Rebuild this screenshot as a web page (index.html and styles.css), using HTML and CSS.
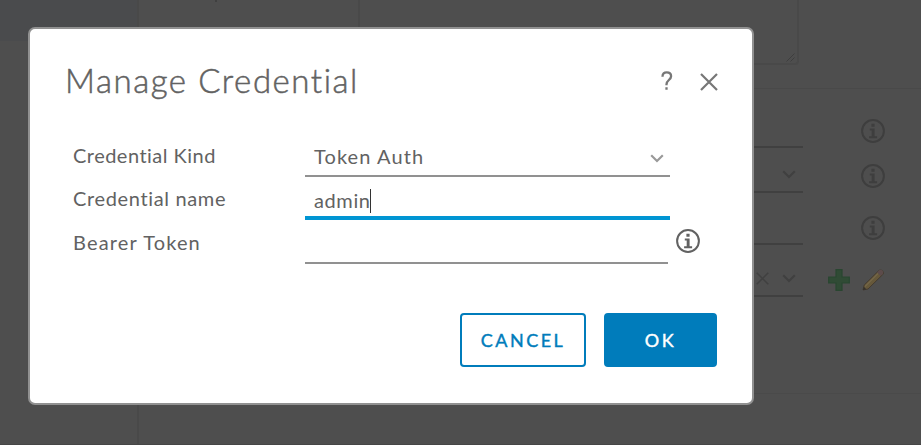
FILE: index.html
```
<!DOCTYPE html>
<html lang="en">
<head>
<meta charset="utf-8">
<title>Manage Credential</title>
<link rel="stylesheet" href="styles.css">
</head>
<body>
<svg class="defs" aria-hidden="true">
  <symbol id="info" viewBox="0 0 24 24"><circle cx="12" cy="12" r="10.9" fill="none" stroke="currentColor" stroke-width="2"/><path d="M10.400 4.800h3.200v3h-3.200zM8.800 9.400h4.800v7.900h2.500v2H8.100v-2h2.600v-5.900H8.800z" fill="currentColor"/></symbol>
  <symbol id="chevron" viewBox="0 0 14 9"><path d="M1.200 1.300 7 7l5.800-5.700" fill="none" stroke="currentColor" stroke-width="2.200"/></symbol>
  <symbol id="cross" viewBox="0 0 18 18"><path d="M1 1l16 16M17 1 1 17" fill="none" stroke="currentColor" stroke-width="2.200"/></symbol>
</svg>
<div class="page">
  <aside class="sidebar"><div class="selected"></div></aside>
  <div class="labels"><i class="descender"></i></div>
  <main class="content">
    <div class="textbox"><svg class="grip" viewBox="0 0 9 9"><path d="M.5 8.500l8-8M4.500 8.500l4-4" stroke="currentColor"/></svg></div>
    <div class="form">
      <div class="row row-a"><div class="line"></div><svg class="info"><use href="#info"/></svg></div>
      <div class="row row-b"><div class="line"><svg class="chevron"><use href="#chevron"/></svg></div><svg class="info"><use href="#info"/></svg></div>
      <div class="row row-c"><div class="line"></div><svg class="info"><use href="#info"/></svg></div>
      <div class="row row-d"><div class="line"><svg class="clear"><use href="#cross"/></svg><svg class="chevron"><use href="#chevron"/></svg></div>
        <svg class="plus" viewBox="0 0 22 22"><path d="M8 .7h6V8h7.300v6H14v7.300H8V14H.7V8H8z" fill="#304b35" stroke="#294630" stroke-width="1.200"/></svg>
        <svg class="pencil" viewBox="0 0 22 22"><path d="M1 21l1.200-5L17 1.400q2-1.400 4 1 1.200 1.800-.3 3.200L6 20z" fill="#66583a" stroke="#443b30"/><path d="M15 3.500 17.300 1q1.700-1 3.400.8 1.200 1.600-.2 3.400L18.500 7z" fill="#5c4b4b"/><path d="M3 17.500 16 4.500" stroke="#756747" stroke-width="1.200"/><path d="M1 21l.8-3.200 2.500 2.400z" fill="#33302c"/></svg>
      </div>
    </div>
  </main>
</div>
<section class="modal" role="dialog" aria-label="Manage Credential">
  <header class="head">
    <h1>Manage Credential</h1>
    <svg class="help" viewBox="0 0 12 20"><path d="M1.500 5.700C1.500 2.700 3.100 1.400 5.700 1.400s4.400 1.500 4.400 3.800c0 3.600-4.600 4.100-4.600 8v1.100M5.500 16.300v2.400" fill="none" stroke="currentColor" stroke-width="2.300"/></svg>
    <svg class="close"><use href="#cross"/></svg>
  </header>
  <div class="fields">
    <label class="kind">Credential Kind</label>
    <div class="control select"><span>Token Auth</span><svg class="chevron"><use href="#chevron"/></svg></div>
    <label class="name">Credential name</label>
    <div class="control focused"><span>admin</span><i class="caret"></i></div>
    <label class="token">Bearer Token</label>
    <div class="token-cell"><div class="control"></div><svg class="info"><use href="#info"/></svg></div>
  </div>
  <footer class="actions"><button class="cancel">CANCEL</button><button class="ok">OK</button></footer>
</section>
</body>
</html>
```

FILE: styles.css
```
* { box-sizing: border-box; }
body { margin: 0; width: 921px; height: 445px; overflow: hidden; background: #4e4e4e; color: #626262; font-family: Lato, "Open Sans", sans-serif; }
svg { display: block; flex: none; }
.defs { position: absolute; width: 0; height: 0; }
.page { display: flex; height: 445px; border-bottom: 1px solid #464646; color: #3e3e3e; }
.sidebar { width: 139px; border-right: 2px solid #494949; }
.selected { height: 41px; background: #4a4b4d; }
.labels { width: 221px; height: 390px; border-right: 2px solid #494949; padding-left: 76px; }
.descender { display: block; width: 2px; height: 2px; background: #404040; }
.content { flex: 1; }
.textbox { width: 439px; height: 65px; border: 2px solid #494949; border-left: 0; border-top: 0; border-radius: 0 0 4px 4px; display: flex; justify-content: flex-end; align-items: flex-end; padding: 0 2px 1px; }
.grip { width: 9px; height: 9px; }
.form { margin-top: 23px; height: 306px; border-top: 1px solid #494949; border-bottom: 1px solid #4a4a4a; }
.row { display: flex; align-items: flex-start; }
.line { width: 443px; height: 29px; border-bottom: 2px solid #404040; display: flex; align-items: center; justify-content: flex-end; gap: 13px; padding: 0 7px 6px 0; }
.info { width: 24px; height: 24px; }
.chevron { width: 14px; height: 9px; }
.row .info { margin-left: 58px; }
.row .chevron, .clear { color: #404040; }
.row-a { padding-top: 30px; height: 75px; }
.row-b { height: 52px; }
.row-c { height: 52px; }
.row-d { height: 52px; }
.clear { width: 13px; height: 13px; }
.plus, .pencil { width: 22px; height: 22px; margin-top: 1px; }
.plus { margin-left: 25px; }
.pencil { margin-left: 12px; }
.modal { position: absolute; left: 28px; top: 27px; width: 726px; height: 378px; background: #fff; border: 2px solid #919191; border-radius: 7px; padding: 28px 35px 36px 36px; }
.head { display: flex; height: 48px; align-items: center; }
h1 { margin: 0 0 3px -1px; flex: 1; font-weight: 300; font-size: 33px; line-height: 46px; letter-spacing: 1.550px; white-space: nowrap; -webkit-text-stroke: .5px currentColor; }
.help { width: 12px; height: 20px; margin-right: 27px; color: #777; }
.close { width: 18px; height: 18px; margin: 1px -1px 0 0; color: #777; }
.fields { display: grid; grid-template-columns: 232px 1fr; grid-template-rows: 43px 43px 44px; margin: 29px 0 0 7px; font-size: 20px; line-height: 26px; }
label { padding-top: 8px; white-space: nowrap; }
.kind { letter-spacing: .48px; }
.name { letter-spacing: .65px; }
.token { letter-spacing: 1.150px; padding-top: 9px; }
.control { width: 365px; height: 43px; border-bottom: 2px solid #919191; padding: 9px 6px 0 9px; display: flex; letter-spacing: .6px; }
.select { justify-content: space-between; letter-spacing: 1.100px; }
.select .chevron { margin-top: 11px; color: #999; }
.focused { border-bottom: 4px solid #0095d3; padding-top: 10px; }
.caret { width: 1px; height: 24px; margin: 2px 0 0 -1px; background: #333; }
.token-cell { display: flex; }
.token-cell .control { width: 363px; height: 44px; }
.token-cell .info { margin: 9px 0 0 8px; }
.actions { display: flex; justify-content: flex-end; gap: 18px; margin-top: 49px; }
button { height: 54px; border: 2px solid #007cbb; border-radius: 4px; padding: 0 0 1px; font: 400 18px Lato, sans-serif; letter-spacing: 2.500px; -webkit-text-stroke: .4px currentColor; }
.cancel { width: 126px; background: #fff; color: #007cbb; }
.ok { width: 113px; background: #007cbb; color: #fff; }
```
